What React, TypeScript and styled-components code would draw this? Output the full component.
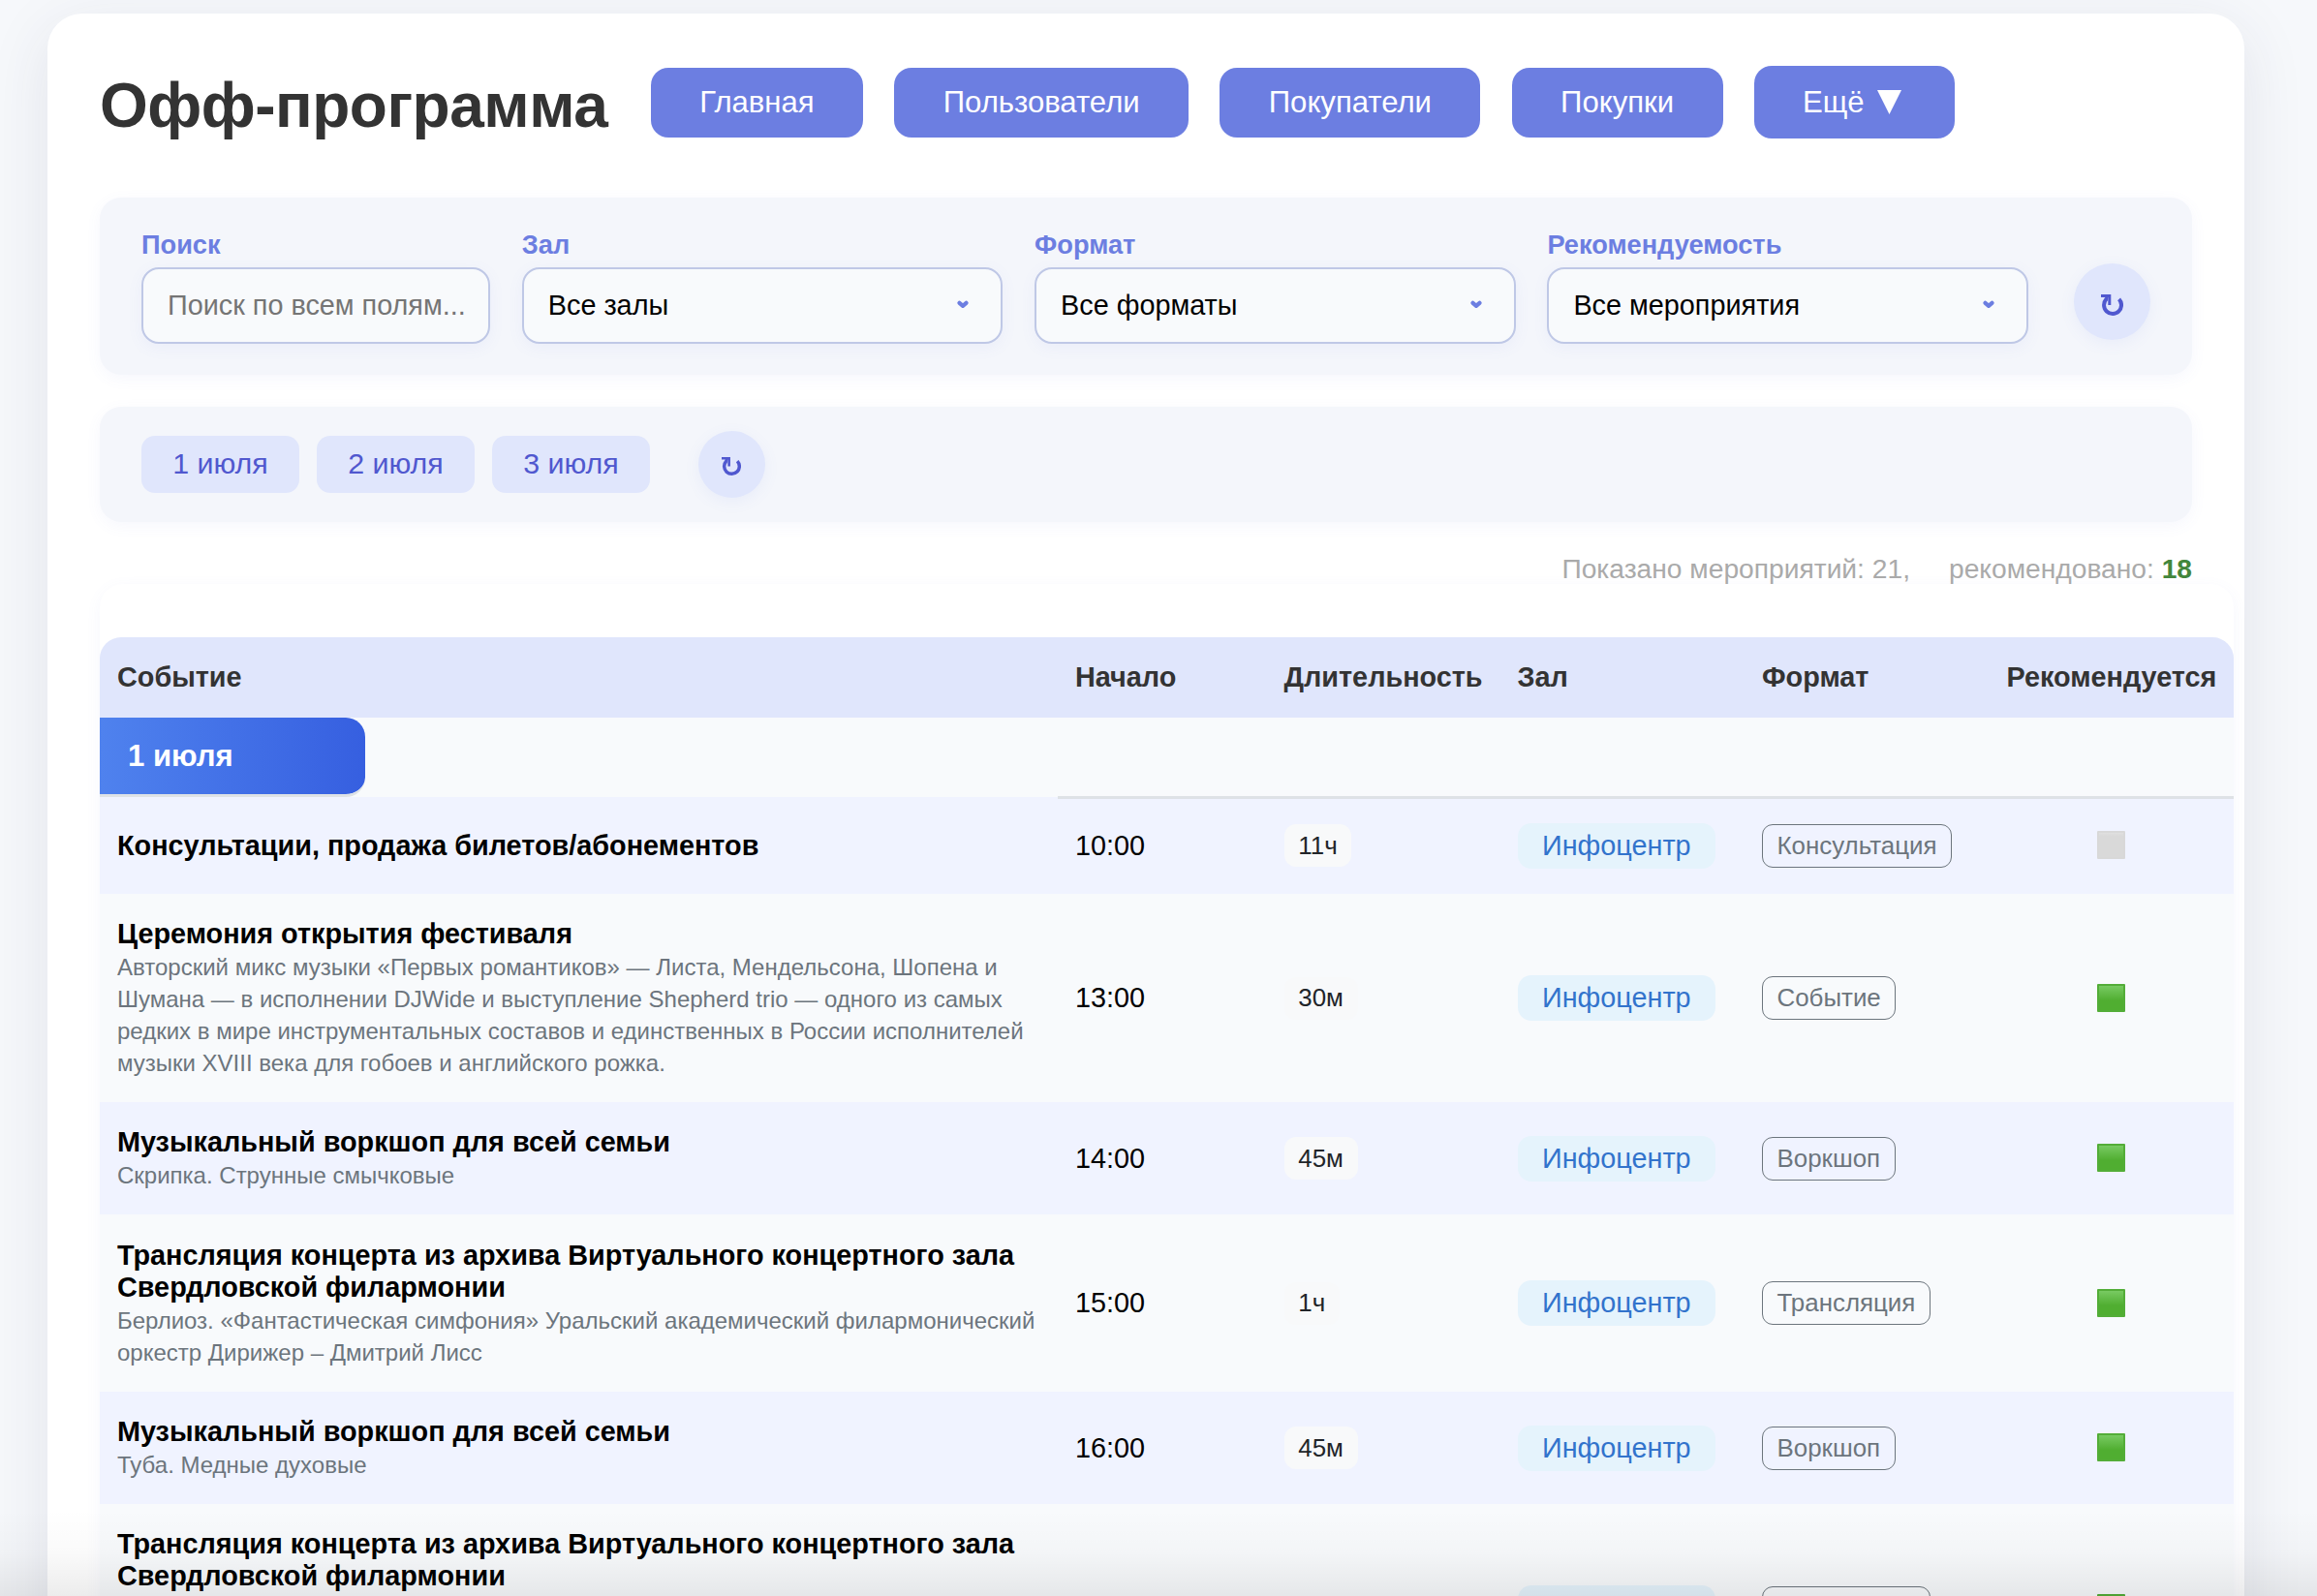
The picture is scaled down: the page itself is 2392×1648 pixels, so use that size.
import React from 'react';
import styled, { createGlobalStyle } from 'styled-components';

const Global = createGlobalStyle`
  * { box-sizing: border-box; }
  html { height: 100%; overflow: hidden; }
  body {
    margin: 0;
    height: 1648px;
    overflow: hidden;
    background: #f6f8fb;
    font-family: "Liberation Sans", Arial, sans-serif;
    color: #000;
  }
`;

const Page = styled.div`
  padding: 14px 75px 0 49px;
  height: 1648px;
  overflow: hidden;
  position: relative;
`;

const Card = styled.main`
  background: #fff;
  border-radius: 36px;
  height: 1900px;
  padding: 54px;
  box-shadow: 0 16px 64px rgba(50, 50, 93, 0.1);
`;

const Header = styled.header`
  display: flex;
  align-items: flex-start;
  height: 136px;
`;

const Title = styled.h1`
  margin: 5px 0 0;
  width: 569px;
  font-size: 64px;
  line-height: 73px;
  font-weight: 700;
  letter-spacing: -0.5px;
  color: #333;
  white-space: nowrap;
`;

const Nav = styled.nav`
  display: flex;
  align-items: center;
  gap: 32.2px;
`;

const NavButton = styled.button<{ $w: number; $h?: number }>`
  width: ${p => p.$w}px;
  height: ${p => p.$h ?? 72}px;
  padding: 0;
  border: 0;
  border-radius: 18px;
  background: #6c7ee1;
  color: #fff;
  font: 400 31.1px "Liberation Sans", sans-serif;
  display: flex;
  align-items: center;
  justify-content: center;
  gap: 13px;
  white-space: nowrap;
`;

const Triangle = styled.svg`
  margin-right: 5px;
`;

const Panel = styled.section<{ $h: number }>`
  display: flex;
  height: ${p => p.$h}px;
  padding: 0 43px;
  background: #f4f6fb;
  border-radius: 22px;
  box-shadow: 0 4px 16px rgba(108, 126, 225, 0.06);
`;

const Filters = styled(Panel)`
  margin-bottom: 33px;
  padding-top: 33px;
  gap: 32.8px;
`;

const Field = styled.label<{ $w: number }>`
  display: flex;
  flex-direction: column;
  width: ${p => p.$w}px;
  font-size: 27.2px;
  line-height: 31px;
  font-weight: 700;
  color: #6c7ee1;
`;

const Control = styled.span`
  margin-top: 8px;
  height: 79px;
  padding: 0 32px 0 25px;
  display: flex;
  align-items: center;
  justify-content: space-between;
  border: 2px solid #bfc8e6;
  border-radius: 18px;
  background: #f8fafc;
  box-shadow: 0 4px 16px rgba(108, 126, 225, 0.07);
  font-size: 28.8px;
  font-weight: 400;
  color: #000;
  white-space: nowrap;
`;

const Placeholder = styled.span`
  color: #757575;
`;

const Chevron = styled.svg`
  margin-bottom: 3px;
`;

const Round = styled.button<{ $d: number }>`
  width: ${p => p.$d}px;
  height: ${p => p.$d}px;
  padding: 7px 0 0;
  border: 0;
  border-radius: 50%;
  background: #e0e6fc;
  color: #5058cf;
  display: flex;
  align-items: center;
  justify-content: center;
  box-shadow: 0 4px 16px rgba(108, 126, 225, 0.08);
`;

const FilterReset = styled(Round)`
  margin: 35px 0 0 14px;
`;

const Dates = styled(Panel)`
  align-items: center;
  gap: 18px;
`;

const DateButton = styled.button`
  width: 163px;
  height: 59px;
  padding: 0 0 2px;
  border: 0;
  border-radius: 14px;
  background: #e0e6fc;
  color: #5058cf;
  font: 400 30.4px "Liberation Sans", sans-serif;
`;

const DateReset = styled(Round)`
  margin: 0 0 1px 32px;
  padding: 6px 1px 0 0;
`;

const Counts = styled.div`
  display: flex;
  justify-content: flex-end;
  height: 64px;
  padding-top: 32px;
  gap: 40px;
  font-size: 28.2px;
  line-height: 32px;
  color: #aaa;
`;

const Recommended = styled.b`
  color: #43863c;
`;

const Table = styled.div`
  width: 2203px;
  padding-top: 55px;
  border-radius: 24px;
  box-shadow: 0 4px 16px rgba(108, 126, 225, 0.06);
`;

const Row = styled.div<{ $h: number; $tint?: boolean }>`
  display: grid;
  grid-template-columns: 989px 215.5px 241px 252.5px 252.5px 252.5px;
  align-items: center;
  height: ${p => p.$h}px;
  background: ${p => (p.$tint ? '#f0f3ff' : '#f8fafc')};
`;

const HeadRow = styled(Row)`
  background: #e0e6fc;
  border-radius: 22px 22px 0 0;
  font-weight: 700;
  color: #333;
`;

const Cell = styled.div`
  display: flex;
  align-items: center;
  padding: 0 18px;
  font-size: 28.8px;
  white-space: nowrap;
`;

const DayRow = styled.div`
  display: grid;
  grid-template-columns: 989px 1fr;
  height: 82px;
  background: #f8fafc;
`;

const DayBadge = styled.div`
  width: 274px;
  height: 82px;
  padding-left: 29px;
  border-bottom: 3px solid #dee2e6;
  border-radius: 0 20px 20px 0;
  background: linear-gradient(90deg, #4f82ee, #365fe0) padding-box;
  color: #fff;
  font-size: 31.1px;
  line-height: 79px;
  font-weight: 700;
`;

const DayLine = styled.div`
  height: 84px;
  border-bottom: 3px solid #dee2e6;
  position: relative;
`;

const EventCell = styled.div`
  padding: 1px 18px 0;
`;

const EventName = styled.div`
  font-size: 28.8px;
  line-height: 33px;
  font-weight: 700;
`;

const EventInfo = styled.div`
  margin-top: 1px;
  font-size: 24px;
  line-height: 33px;
  color: #6c757d;
  white-space: nowrap;
`;

const Duration = styled.span`
  display: inline-flex;
  align-items: center;
  height: 44px;
  padding: 0 14.8px;
  border-radius: 12px;
  background: #f8f9fa;
  color: #212529;
  font-size: 25.9px;
`;

const Hall = styled.span`
  display: inline-flex;
  align-items: center;
  height: 47px;
  padding: 0 25.5px;
  border-radius: 14px;
  background: #e5f3fc;
  color: #3273cc;
  font-size: 28.8px;
`;

const Format = styled.span`
  display: inline-flex;
  align-items: center;
  height: 45px;
  padding: 0 14.5px;
  border: 1px solid #6c757d;
  border-radius: 11px;
  color: #6c757d;
  font-size: 25.9px;
`;

const MarkCell = styled.div`
  display: flex;
  justify-content: center;
  padding: 0 1px 1px 0;
`;

const Mark = styled.span<{ $on: boolean }>`
  width: 29px;
  height: 29px;
  border-radius: 1px;
  border: 2px solid ${p => (p.$on ? '#53ad38' : '#d8d8d8')};
  background: ${p => (p.$on ? 'linear-gradient(#78ca62, #50ae31 60%)' : 'linear-gradient(#e0e0e0, #d9d9d9 12%)')};
`;

const BottomShade = styled.div`
  position: absolute;
  left: 0;
  right: 0;
  bottom: 0;
  height: 90px;
  background: linear-gradient(rgba(0, 0, 0, 0), rgba(0, 0, 0, 0.02) 50%, rgba(0, 0, 0, 0.075));
`;

const Arrow = () => (
  <Chevron width="14" height="9" viewBox="0 0 14 9">
    <path d="M3.5 2.8 L7 5.8 L10.5 2.8" fill="none" stroke="#6c7ee1" strokeWidth="4.2" strokeLinecap="round" strokeLinejoin="round" />
  </Chevron>
);

const Reload = ({ size }: { size: number }) => (
  <svg width={size} height={size * 22 / 23} viewBox="0 0 23 22">
    <path d="M18.6 4.8 A9 9 0 1 1 5.4 4.9" fill="none" stroke="currentColor" strokeWidth="4" />
    <path d="M0 1.4 H8.8 V11" fill="none" stroke="currentColor" strokeWidth="3" />
    <path d="M4.2 2 L7.6 2 L6.8 6.4 L4 6 Z" fill="currentColor" />
  </svg>
);

interface Item {
  h: number;
  name: string[];
  info: string[];
  time: string;
  dur: string;
  format: string;
  on: boolean;
}

const relay = ['Трансляция концерта из архива Виртуального концертного зала', 'Свердловской филармонии'];

const items: Item[] = [
  { h: 100, name: ['Консультации, продажа билетов/абонементов'], info: [], time: '10:00', dur: '11ч', format: 'Консультация', on: false },
  {
    h: 215,
    name: ['Церемония открытия фестиваля'],
    info: [
      'Авторский микс музыки «Первых романтиков» — Листа, Мендельсона, Шопена и',
      'Шумана — в исполнении DJWide и выступление Shepherd trio — одного из самых',
      'редких в мире инструментальных составов и единственных в России исполнителей',
      'музыки XVIII века для гобоев и английского рожка.',
    ],
    time: '13:00', dur: '30м', format: 'Событие', on: true,
  },
  { h: 116, name: ['Музыкальный воркшоп для всей семьи'], info: ['Скрипка. Струнные смычковые'], time: '14:00', dur: '45м', format: 'Воркшоп', on: true },
  {
    h: 183,
    name: relay,
    info: ['Берлиоз. «Фантастическая симфония» Уральский академический филармонический', 'оркестр Дирижер – Дмитрий Лисс'],
    time: '15:00', dur: '1ч', format: 'Трансляция', on: true,
  },
  { h: 116, name: ['Музыкальный воркшоп для всей семьи'], info: ['Туба. Медные духовые'], time: '16:00', dur: '45м', format: 'Воркшоп', on: true },
  { h: 215, name: relay, info: ['', '', ''], time: '', dur: '', format: '', on: true },
];

const FormatEdge = styled(Format)`
  width: 174px;
`;

const HallEdge = styled(Hall)`
  width: 204px;
`;

const Select = ({ label, value }: { label: string; value: string }) => (
  <Field $w={496.5}>
    {label}
    <Control>{value}<Arrow /></Control>
  </Field>
);

export default function App() {
  return (
    <>
      <Global />
      <Page>
        <Card>
          <Header>
            <Title>Офф-программа</Title>
            <Nav>
              <NavButton $w={219}>Главная</NavButton>
              <NavButton $w={304}>Пользователи</NavButton>
              <NavButton $w={269}>Покупатели</NavButton>
              <NavButton $w={218}>Покупки</NavButton>
              <NavButton $w={207} $h={75}>
                Ещё
                <Triangle width="25" height="25" viewBox="0 0 25 25"><path d="M0 0H25L12.5 25Z" fill="#fff" /></Triangle>
              </NavButton>
            </Nav>
          </Header>
          <Filters $h={183}>
            <Field $w={360}>
              Поиск
              <Control><Placeholder>Поиск по всем полям...</Placeholder></Control>
            </Field>
            <Select label="Зал" value="Все залы" />
            <Select label="Формат" value="Все форматы" />
            <Select label="Рекомендуемость" value="Все мероприятия" />
            <FilterReset $d={79}><Reload size={23} /></FilterReset>
          </Filters>
          <Dates $h={119}>
            <DateButton>1 июля</DateButton>
            <DateButton>2 июля</DateButton>
            <DateButton>3 июля</DateButton>
            <DateReset $d={69}><Reload size={20} /></DateReset>
          </Dates>
          <Counts>
            <span>Показано мероприятий: 21,</span>
            <span>рекомендовано: <Recommended>18</Recommended></span>
          </Counts>
          <Table>
            <HeadRow $h={83}>
              {['Событие', 'Начало', 'Длительность', 'Зал', 'Формат', 'Рекомендуется'].map(t => <Cell key={t}>{t}</Cell>)}
            </HeadRow>
            <DayRow>
              <DayBadge>1 июля</DayBadge>
              <DayLine />
            </DayRow>
            {items.map((it, i) => (
              <Row key={i} $h={it.h} $tint={i % 2 === 0}>
                <EventCell>
                  {it.name.map(n => <EventName key={n}>{n}</EventName>)}
                  {it.info.length > 0 && <EventInfo>{it.info.map((l, k) => <div key={k}>{l || '\u00a0'}</div>)}</EventInfo>}
                </EventCell>
                <Cell>{it.time}</Cell>
                <Cell>{it.dur && <Duration>{it.dur}</Duration>}</Cell>
                <Cell>{it.time ? <Hall>Инфоцентр</Hall> : <HallEdge />}</Cell>
                <Cell>{it.format ? <Format>{it.format}</Format> : <FormatEdge />}</Cell>
                <MarkCell><Mark $on={it.on} /></MarkCell>
              </Row>
            ))}
          </Table>
        </Card>
        <BottomShade />
      </Page>
    </>
  );
}
